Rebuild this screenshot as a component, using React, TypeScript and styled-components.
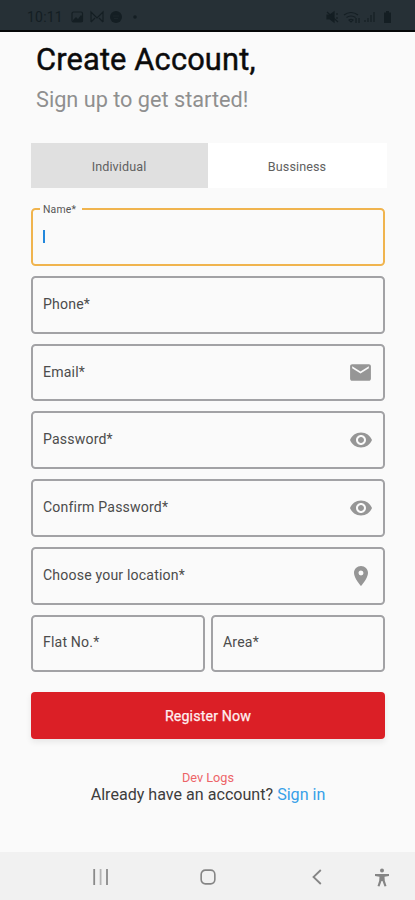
import React from "react";
import styled, { createGlobalStyle } from "styled-components";
import { MdEmail, MdLocationOn, MdRemoveRedEye } from "react-icons/md";

const GlobalStyle = createGlobalStyle`
  * { box-sizing: border-box; }
  body { margin: 0; background: #fafafa; font-family: Roboto, sans-serif; }
  button, input { font-family: inherit; }
`;

const Screen = styled.div`
  width: 415px;
  height: 900px;
  display: flex;
  flex-direction: column;
  overflow: hidden;
  background: #fafafa;
`;

const StatusBar = styled.header`
  height: 32px;
  flex: none;
  display: flex;
  justify-content: space-between;
  padding: 4px 22px 0 27px;
  background: #263036;
  border-bottom: 2px solid #050708;
  color: #141e23;
`;

const StatusGroup = styled.div`
  display: flex;
  align-items: center;
`;

const Clock = styled.span`
  width: 44px;
  font-size: 14px;
  letter-spacing: 0.2px;
`;

const Main = styled.main`
  flex: 1;
  padding: 0 30px 0 31px;
`;

const Title = styled.h1`
  margin: 10px 0 0 5px;
  font-size: 30.8px;
  line-height: 36px;
  font-weight: 400;
  letter-spacing: 0.15px;
  color: #0b0b0b;
  -webkit-text-stroke: 0.45px #0b0b0b;
  white-space: nowrap;
`;

const Subtitle = styled.p`
  margin: 8px 0 0 5px;
  font-size: 21.7px;
  line-height: 28px;
  color: #8f8f8f;
  white-space: nowrap;
`;

const Tabs = styled.div`
  display: grid;
  grid-template-columns: 177px 179px;
  height: 45px;
  margin-top: 29px;
`;

const Tab = styled.button<{ $active?: boolean }>`
  padding: 1px 1px 0 0;
  border: 0;
  background: ${(p) => (p.$active ? "#e0e0e0" : "#ffffff")};
  color: #606060;
  font-size: 12.6px;
  letter-spacing: 0.1px;
`;

const Form = styled.div`
  display: flex;
  flex-direction: column;
  gap: 10px;
  margin-top: 20.4px;
`;

const Row = styled.div`
  display: flex;
  gap: 6px;
`;

const FieldBox = styled.div<{ $focused?: boolean }>`
  position: relative;
  flex: 1;
  height: 57.7px;
  min-height: 57.7px;
  display: flex;
  align-items: center;
  justify-content: space-between;
  padding: 0 10px;
  border: 2px solid ${(p) => (p.$focused ? "#f0b44e" : "#a2a2a5")};
  border-radius: 4.5px;
  color: #969696;
`;

const FieldLabel = styled.span`
  margin-top: -2px;
  color: #4c4c4c;
  font-size: 14.1px;
  letter-spacing: 0.17px;
`;

const FloatingLabel = styled.span`
  position: absolute;
  top: -7px;
  left: 7px;
  padding: 0 6px 0 3px;
  background: #fafafa;
  color: #555;
  font-size: 10.4px;
  line-height: 13px;
  letter-spacing: 0.2px;
`;

const Caret = styled.span`
  width: 2px;
  height: 13px;
  margin-top: -1px;
  background: #2388dc;
`;

const Register = styled.button`
  display: block;
  width: 354px;
  height: 47px;
  margin-top: 19.6px;
  padding: 1px 0 0;
  border: 0;
  border-radius: 4px;
  background: #db1f26;
  box-shadow: 0 3px 6px rgba(0, 0, 0, 0.08);
  color: #fff0f0;
  font-size: 14.2px;
  letter-spacing: 0.15px;
  -webkit-text-stroke: 0.25px #fff0f0;
`;

const Footer = styled.div`
  margin-top: 31px;
  text-align: center;
  color: #3d3d3d;
  font-size: 16.1px;
  line-height: 18px;
  white-space: nowrap;
`;

const DevLogs = styled.div`
  color: #ed6467;
  font-size: 12.7px;
  line-height: 16px;
`;

const SignIn = styled.span`
  color: #36a0e8;
`;

const NavBar = styled.nav`
  height: 48px;
  flex: none;
  display: grid;
  grid-template-columns: 200px 16px 118px 81px;
  align-items: center;
  padding-top: 2px;
  background: #f1f1f1;
`;

const NavSlot = styled.span<{ $indent?: number }>`
  display: flex;
  padding-left: ${(p) => p.$indent ?? 0}px;
`;

type FieldProps = { label: string; icon?: React.ReactNode };

const Field = ({ label, icon }: FieldProps) => (
  <FieldBox>
    <FieldLabel>{label}</FieldLabel>
    {icon}
  </FieldBox>
);

const NotificationIcons = () => (
  <svg width="74" height="16" viewBox="0 0 74 16" fill="none" stroke="currentColor" strokeWidth="1.2">
    <rect x="1" y="3" width="10.5" height="10" rx="1.5" />
    <path d="M2 11l3-3 2 2 3-4 2 2v5H2z" fill="currentColor" stroke="none" />
    <path d="M20 13V3l6 6 6-6v10M20 13l4-4M32 13l-4-4" />
    <circle cx="45" cy="8" r="6" fill="currentColor" stroke="none" />
    <path d="M42 7h6M43 9.5h4" stroke="#1d272c" strokeWidth="0.8" />
    <circle cx="64" cy="8" r="1.8" fill="currentColor" stroke="none" />
  </svg>
);

const SystemIcons = () => (
  <svg width="67" height="16" viewBox="0 0 67 16" fill="none" stroke="currentColor" strokeWidth="1.2">
    <path d="M1 6h3l4-3v10l-4-3H1z" fill="currentColor" />
    <path d="M1 3l11 10M11 4v2M11 8v2" />
    <path d="M18 6q7-5 14 0M20.500 8.500q4.500-3 9 0M23 11q2-1.500 4 0l-2 2zM30 9v5M33 9v5" />
    <path d="M39 13v-2M42 13V9M45 13V6M48 13V3" />
    <path d="M58 3.500h2V2h3v1.500h2V14h-7z" fill="currentColor" stroke="none" />
  </svg>
);

export default function App() {
  return (
    <Screen>
      <GlobalStyle />
      <StatusBar>
        <StatusGroup>
          <Clock>10:11</Clock>
          <NotificationIcons />
        </StatusGroup>
        <StatusGroup>
          <SystemIcons />
        </StatusGroup>
      </StatusBar>
      <Main>
        <Title>Create Account,</Title>
        <Subtitle>Sign up to get started!</Subtitle>
        <Tabs>
          <Tab $active>Individual</Tab>
          <Tab>Bussiness</Tab>
        </Tabs>
        <Form>
          <FieldBox $focused>
            <FloatingLabel>Name*</FloatingLabel>
            <Caret />
          </FieldBox>
          <Field label="Phone*" />
          <Field label="Email*" icon={<MdEmail size={25} />} />
          <Field label="Password*" icon={<MdRemoveRedEye size={24} />} />
          <Field label="Confirm Password*" icon={<MdRemoveRedEye size={24} />} />
          <Field label="Choose your location*" icon={<MdLocationOn size={24} />} />
          <Row>
            <Field label="Flat No.*" />
            <Field label="Area*" />
          </Row>
        </Form>
        <Register>Register Now</Register>
        <Footer>
          <DevLogs>Dev Logs</DevLogs>
          Already have an account? <SignIn>Sign in</SignIn>
        </Footer>
      </Main>
      <NavBar>
        <NavSlot $indent={92}>
          <svg width="18" height="18" viewBox="0 0 18 18" strokeWidth="1.8">
            <path d="M2.200 1v16M15 1v16" stroke="#8a8a8a" />
            <path d="M8.600 1v16" stroke="#b4b4b4" />
          </svg>
        </NavSlot>
        <NavSlot>
          <svg width="18" height="18" viewBox="0 0 18 18" fill="none" stroke="#858585" strokeWidth="1.800">
            <rect x="1.300" y="1.300" width="15.400" height="15.400" rx="4.800" />
          </svg>
        </NavSlot>
        <NavSlot $indent={95}>
          <svg width="12" height="18" viewBox="0 0 12 18" fill="none" stroke="#858585" strokeWidth="1.800">
            <path d="M9.800 2L2.500 9l7.300 7" />
          </svg>
        </NavSlot>
        <NavSlot $indent={40}>
          <svg width="16" height="19" viewBox="0 0 16 19" fill="#858585">
            <circle cx="8" cy="2.500" r="2" />
            <path d="M1 6h14v2l-4.500 .8.3 4 1.700 5.200-2 .6L8.500 13h-1l-2 5.600-2-.6 1.700-5.200.3-4L1 8z" />
          </svg>
        </NavSlot>
      </NavBar>
    </Screen>
  );
}
